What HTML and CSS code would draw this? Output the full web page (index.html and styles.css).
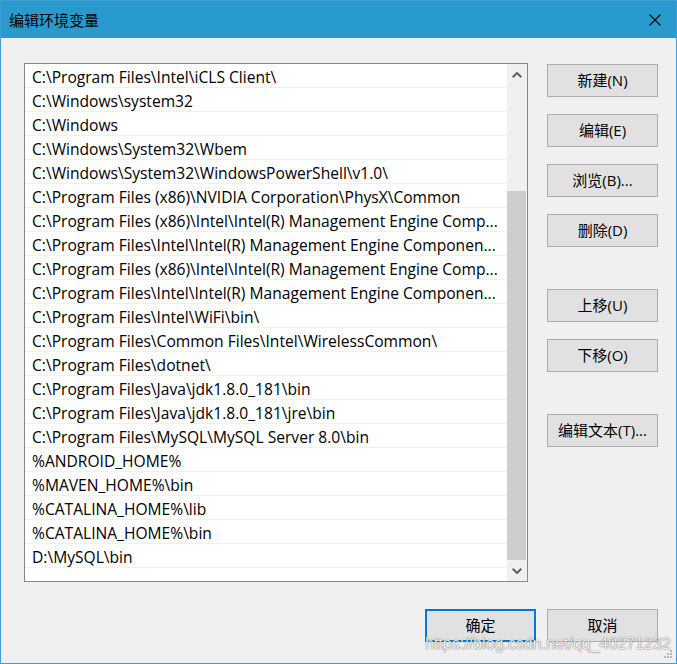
FILE: index.html
```html
<!DOCTYPE html>
<html lang="zh-CN">
<head>
<meta charset="utf-8">
<title>编辑环境变量</title>
<link rel="stylesheet" href="styles.css">
</head>
<body>
<div class="window">
  <div class="titlebar">
    <span class="title">编辑环境变量</span>
    <div class="close">
      <svg width="12" height="12" viewBox="0 0 12 12"><path d="M0.5 0.5 L11.5 11.5 M11.5 0.5 L0.5 11.5" stroke="#000" stroke-width="1.1" fill="none"/></svg>
    </div>
  </div>
  <div class="content">
    <div class="main">
      <div class="list">
        <ul class="items">
          <li>C:\Program Files\Intel\iCLS Client\</li>
          <li>C:\Windows\system32</li>
          <li>C:\Windows</li>
          <li>C:\Windows\System32\Wbem</li>
          <li>C:\Windows\System32\WindowsPowerShell\v1.0\</li>
          <li>C:\Program Files (x86)\NVIDIA Corporation\PhysX\Common</li>
          <li>C:\Program Files (x86)\Intel\Intel(R) Management Engine Comp...</li>
          <li>C:\Program Files\Intel\Intel(R) Management Engine Componen...</li>
          <li>C:\Program Files (x86)\Intel\Intel(R) Management Engine Comp...</li>
          <li>C:\Program Files\Intel\Intel(R) Management Engine Componen...</li>
          <li>C:\Program Files\Intel\WiFi\bin\</li>
          <li>C:\Program Files\Common Files\Intel\WirelessCommon\</li>
          <li>C:\Program Files\dotnet\</li>
          <li>C:\Program Files\Java\jdk1.8.0_181\bin</li>
          <li>C:\Program Files\Java\jdk1.8.0_181\jre\bin</li>
          <li>C:\Program Files\MySQL\MySQL Server 8.0\bin</li>
          <li>%ANDROID_HOME%</li>
          <li>%MAVEN_HOME%\bin</li>
          <li>%CATALINA_HOME%\lib</li>
          <li>%CATALINA_HOME%\bin</li>
          <li>D:\MySQL\bin</li>
        </ul>
        <div class="scrollbar">
          <div class="arrow">
            <svg width="10" height="6" viewBox="0 0 10 6"><path d="M0.7 5.3 L5 1 L9.3 5.3" stroke="#606060" stroke-width="2" fill="none"/></svg>
          </div>
          <div class="track"><div class="thumb"></div></div>
          <div class="arrow">
            <svg width="10" height="6" viewBox="0 0 10 6"><path d="M0.7 0.7 L5 5 L9.3 0.7" stroke="#606060" stroke-width="2" fill="none"/></svg>
          </div>
        </div>
      </div>
      <div class="side">
        <div class="group">
          <button class="btn">新建(N)</button>
          <button class="btn">编辑(E)</button>
          <button class="btn">浏览(B)...</button>
          <button class="btn">删除(D)</button>
        </div>
        <div class="group">
          <button class="btn">上移(U)</button>
          <button class="btn">下移(O)</button>
        </div>
        <div class="group">
          <button class="btn">编辑文本(T)...</button>
        </div>
      </div>
    </div>
    <div class="footer">
      <button class="btn default">确定</button>
      <button class="btn">取消</button>
    </div>
  </div>
  <div class="watermark">https://blog.csdn.net/qq_40271232</div>
  <svg class="grip" width="12" height="12" viewBox="0 0 12 12">
    <rect x="9" y="0" width="2" height="2" fill="#b8b8b8"/>
    <rect x="6" y="3" width="2" height="2" fill="#b8b8b8"/>
    <rect x="9" y="3" width="2" height="2" fill="#b8b8b8"/>
    <rect x="3" y="6" width="2" height="2" fill="#b8b8b8"/>
    <rect x="6" y="6" width="2" height="2" fill="#b8b8b8"/>
    <rect x="9" y="6" width="2" height="2" fill="#b8b8b8"/>
  </svg>
</div>
</body>
</html>
```

FILE: styles.css
```css
* {
  box-sizing: border-box;
}

html, body {
  margin: 0;
  padding: 0;
  background: #f0f0f0;
}

.window {
  position: relative;
  width: 677px;
  height: 664px;
  border: 1px solid #3f9fd0;
  background: #f0f0f0;
  display: flex;
  flex-direction: column;
  font-family: "Open Sans", "Noto Sans CJK SC", sans-serif;
  color: #000;
  overflow: hidden;
}

.titlebar {
  height: 37px;
  background: #299acd;
  display: flex;
  align-items: center;
  justify-content: space-between;
  padding-left: 8px;
  flex: none;
}

.title {
  font-family: "Noto Sans CJK SC", sans-serif;
  font-size: 15px;
  line-height: 20px;
  color: #000;
  padding-top: 1px;
}

.close {
  width: 42px;
  height: 37px;
  display: flex;
  align-items: center;
  justify-content: center;
}

.close svg {
  display: block;
}

.content {
  padding: 25px 18px 0 23px;
}

.main {
  display: flex;
  gap: 19px;
}

.list {
  width: 504px;
  height: 519px;
  border: 1px solid #828790;
  background: #fff;
  display: flex;
}

.items {
  list-style: none;
  margin: 0;
  padding: 0;
  flex: 1;
  min-width: 0;
}

.items li {
  height: 24px;
  padding: 3px 2px 0 7px;
  line-height: 20px;
  font-size: 15.6px;
  border-bottom: 1px solid #f0f0f0;
  white-space: nowrap;
  overflow: hidden;
}

.scrollbar {
  width: 20px;
  background: #f0f0f0;
  display: flex;
  flex-direction: column;
  flex: none;
}

.arrow {
  height: 21px;
  display: flex;
  align-items: center;
  justify-content: center;
  padding-right: 1px;
  flex: none;
}

.arrow svg {
  display: block;
}

.track {
  flex: 1;
  display: flex;
  flex-direction: column;
  justify-content: flex-end;
}

.thumb {
  height: 369px;
  margin-right: 1px;
  background: #cdcdcd;
}

.side {
  display: flex;
  flex-direction: column;
  gap: 42px;
  padding-top: 1px;
}

.group {
  display: flex;
  flex-direction: column;
  gap: 17px;
}

.btn {
  width: 111px;
  height: 33px;
  margin: 0;
  padding: 0 0 2px 0;
  background: #e1e1e1;
  border: 1px solid #adadad;
  font-family: "Open Sans", "Noto Sans CJK SC", sans-serif;
  font-size: 15px;
  color: #000;
  line-height: 20px;
}

.btn.default {
  border: 2px solid #0078d7;
}

.footer {
  margin-top: 27px;
  display: flex;
  justify-content: flex-end;
  gap: 11px;
}

.watermark {
  position: absolute;
  left: 424px;
  top: 634px;
  font-family: "Liberation Sans", Arial, sans-serif;
  font-size: 16px;
  line-height: 18px;
  color: rgba(255, 255, 255, 0.9);
  text-shadow: 0 0 1px rgba(0, 0, 0, 0.45), 0 0 1px rgba(0, 0, 0, 0.3), 1px 1px 1px rgba(0, 0, 0, 0.1);
  white-space: nowrap;
  pointer-events: none;
}

.grip {
  position: absolute;
  right: 3px;
  bottom: 1px;
  display: block;
}
```
